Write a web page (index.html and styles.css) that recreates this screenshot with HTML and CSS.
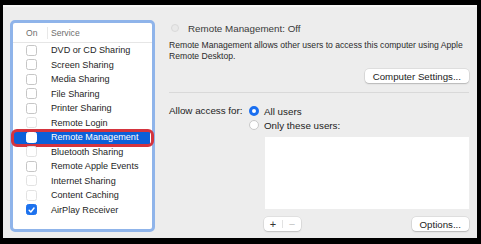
FILE: index.html
```html
<!DOCTYPE html>
<html lang="en">
<head>
  <meta charset="UTF-8" />
  <title>Sharing</title>
  <link rel="stylesheet" href="styles.css">
</head>
<body>

  <div class="window">
    <div class="services">
      <div class="svc-head">
        <span class="col-on">On</span>
        <span class="col-name">Service</span>
      </div>
      <ul class="svc-list">
        <li><span class="check"></span>DVD or CD Sharing</li>
        <li><span class="check"></span>Screen Sharing</li>
        <li><span class="check"></span>Media Sharing</li>
        <li><span class="check"></span>File Sharing</li>
        <li><span class="check"></span>Printer Sharing</li>
        <li><span class="check faint"></span>Remote Login</li>
        <li class="selected"><span class="check"></span>Remote Management</li>
        <li><span class="check faint"></span>Bluetooth Sharing</li>
        <li><span class="check"></span>Remote Apple Events</li>
        <li><span class="check faint"></span>Internet Sharing</li>
        <li><span class="check faint"></span>Content Caching</li>
        <li>
          <span class="check checked">
            <svg width="10" height="10" viewBox="0 0 10 10"><polyline points="2.4,5.2 4.3,7.2 7.8,2.8" fill="none" stroke="#fff" stroke-width="1.6" stroke-linecap="round" stroke-linejoin="round"/></svg>
          </span>AirPlay Receiver
        </li>
      </ul>
    </div>

    <div class="detail">
      <div class="status"><span class="radio disabled"></span>Remote Management: Off</div>
      <p class="desc">Remote Management allows other users to access this computer using Apple<br>Remote Desktop.</p>
      <div class="actions">
        <button class="btn">Computer Settings...</button>
      </div>
      <div class="sep"></div>

      <div class="access">
        <span class="access-label">Allow access for:</span>
        <div class="choices">
          <label class="choice"><span class="radio on"></span>All users</label>
          <label class="choice"><span class="radio"></span>Only these users:</label>
        </div>
      </div>
      <div class="users">
        <div class="user-box"></div>
        <div class="footer">
          <div class="plusminus">
            <span class="pm">+</span>
            <span class="pm-div"></span>
            <span class="pm dim">−</span>
          </div>
          <button class="btn">Options...</button>
        </div>
      </div>
    </div>
  </div>

</body>
</html>
```

FILE: styles.css
```css
body {
  margin: 0;
  padding: 5px 4px 0 3px;
  background: #000;
  font-family: 'Liberation Sans', Arial, sans-serif;
  color: #222;
}

.window {
  display: flex;
  align-items: flex-start;
  height: 231px;
  background: #ededed;
  border-top: 2px solid #f6f6f6;
  padding: 0 8px 0 7px;
}

/* left list of services */
.services {
  margin-top: 13px;
  width: 139px;
  height: 206px;
  background: #fff;
  border: 3px solid #8fb4ea;
  border-radius: 5px;
}

.svc-head {
  display: flex;
  align-items: center;
  height: 19px;
  border-bottom: 1px solid #e6e6e6;
  font-size: 8.6px;
  color: #6e6e6e;
}

.col-on {
  width: 21px;
  padding-left: 13px;
  border-right: 1px solid #e8e8e8;
  line-height: 12px;
}

.col-name {
  padding-left: 3px;
}

.svc-list {
  list-style: none;
  margin: 0;
  padding: 0;
}

.svc-list li {
  position: relative;
  display: flex;
  align-items: center;
  height: 14.5px;
  padding-left: 13px;
  font-size: 9.1px;
  color: #1e1e1e;
}

.check {
  width: 9px;
  height: 9px;
  margin-right: 14px;
  border: 1px solid #c6c6c6;
  border-radius: 2.5px;
  background: #fff;
  display: flex;
}

.check.faint {
  border-color: #e2e2e2;
}

.check.checked {
  border-color: #1d72ee;
  background: #1d72ee;
}

.svc-list li.selected {
  margin: 0 2px 0 1px;
  padding-left: 12px;
  background: #0c5fd8;
  color: #fff;
}

.svc-list li.selected .check {
  border-color: #fff;
}

/* red annotation ring */
.svc-list li.selected::after {
  content: "";
  position: absolute;
  left: -3px;
  right: -4px;
  top: -1px;
  bottom: -2.5px;
  border: 3px solid #d4343e;
  border-radius: 6px;
}

/* right side */
.detail {
  flex: 1;
  margin-left: 14px;
  padding-top: 14px;
}

.status {
  display: flex;
  align-items: center;
  height: 14px;
  font-size: 9.8px;
  color: #3a3a3a;
}

.radio {
  width: 9px;
  height: 9px;
  border-radius: 50%;
  border: 1px solid #c9c9c9;
  background: #fff;
  box-sizing: border-box;
  flex-shrink: 0;
}

.radio.disabled {
  width: 8px;
  height: 8px;
  margin: 0 9px 0 2px;
  background: #e9e9e9;
  border-color: #d9d9d9;
}

.radio.on {
  border: 3px solid #1a6ff0;
  background: #fff;
}

.desc {
  margin: 4.5px 0 0;
  font-size: 8.6px;
  line-height: 11px;
  color: #2b2b2b;
}

.actions {
  display: flex;
  justify-content: flex-end;
  margin-top: 7.5px;
}

.btn {
  height: 14px;
  padding: 0 8px;
  border: none;
  border-radius: 4px;
  background: #fff;
  box-shadow: 0 0 0 0.5px rgba(0,0,0,0.12), 0 1px 1.5px rgba(0,0,0,0.18);
  font-family: inherit;
  font-size: 9.7px;
  color: #222;
}

.sep {
  margin-top: 9px;
  border-top: 1px solid #d9d9d9;
}

.access {
  display: flex;
  margin-top: 11px;
  font-size: 9.8px;
}

.access-label {
  width: 80px;
  line-height: 14px;
}

.choice {
  display: flex;
  align-items: center;
  gap: 5px;
  height: 14px;
}

.choice .radio {
  width: 10px;
  height: 10px;
}

.users {
  margin-left: 95px;
  margin-top: 5px;
}

.user-box {
  height: 72px;
  margin-left: 1px;
  background: #fff;
}

.footer {
  display: flex;
  justify-content: space-between;
  margin-top: 8px;
}

.plusminus {
  display: flex;
  align-items: center;
  width: 37px;
  height: 14px;
  border-radius: 4px;
  background: #fff;
  box-shadow: 0 0 0 0.5px rgba(0,0,0,0.1), 0 1px 1.5px rgba(0,0,0,0.15);
}

.pm {
  flex: 1;
  text-align: center;
  font-size: 11px;
  line-height: 14px;
  color: #333;
}

.pm.dim {
  color: #c4c4c4;
}

.pm-div {
  width: 1px;
  height: 8px;
  background: #e2e2e2;
}
```
